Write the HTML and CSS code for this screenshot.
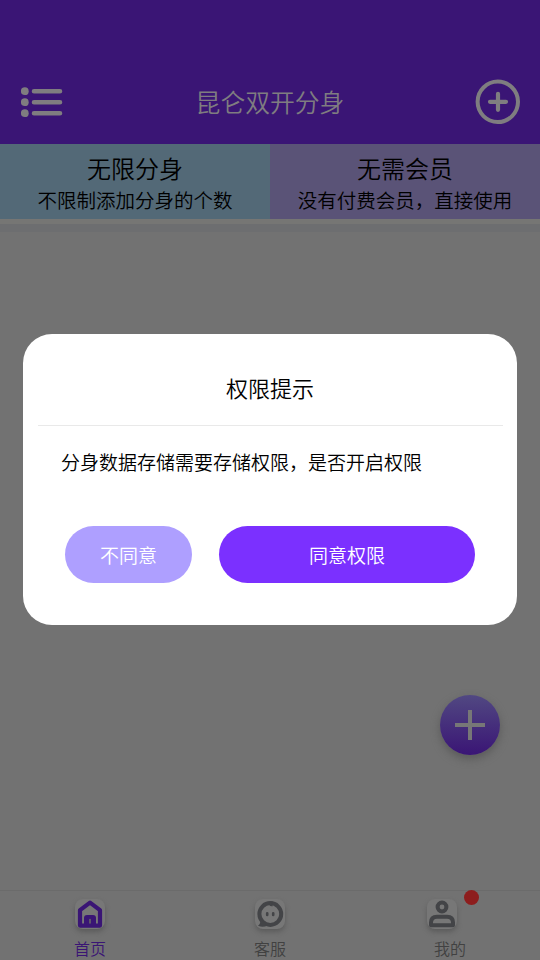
FILE: index.html
```html
<!DOCTYPE html>
<html lang="zh-CN">
<head>
<meta charset="utf-8">
<title>昆仑双开分身</title>
<link rel="stylesheet" href="styles.css">
</head>
<body>
<div class="app">
  <header class="header">
    <svg class="menu" width="42" height="32" viewBox="0 0 42 32">
      <g fill="currentColor"><circle cx="3.8" cy="5.2" r="3.9"/><circle cx="3.8" cy="16.2" r="3.9"/><circle cx="3.8" cy="27.2" r="3.9"/></g>
      <path d="M13 5.2H39M13 16.2H39M13 27.2H39" stroke="currentColor" stroke-width="4.6" stroke-linecap="round"/>
    </svg>
    <h1 class="title">昆仑双开分身</h1>
    <svg class="add" width="46" height="46" viewBox="0 0 46 46" fill="none" stroke="currentColor" stroke-linecap="round">
      <circle cx="22.8" cy="22.8" r="20.2" stroke-width="4"/>
      <path d="M15 22.8H31M23 14.8V30.8" stroke-width="4.2"/>
    </svg>
  </header>
  <section class="features">
    <div class="feature feature-blue"><strong>无限分身</strong><span>不限制添加分身的个数</span></div>
    <div class="feature feature-violet"><strong>无需会员</strong><span>没有付费会员，直接使用</span></div>
  </section>
  <div class="divider"></div>
  <main class="content"></main>
  <nav class="tabs">
    <a class="tab active">
      <span class="icon"><svg width="30" height="30" viewBox="0 0 30 30"><path d="M5 11.2 15 3.6 25 11.2V26.6H5Z" fill="none" stroke="currentColor" stroke-width="4.2" stroke-linejoin="round"/><path d="M9 26V19Q9 16 12 16H18Q21 16 21 19V26Z" fill="currentColor"/><path d="M15 20.5V24" stroke="#666" stroke-width="1.6" stroke-linecap="round"/></svg></span>
      <span>首页</span>
    </a>
    <a class="tab">
      <span class="icon"><svg width="30" height="30" viewBox="0 0 30 30"><circle cx="15.3" cy="15" r="10.9" fill="none" stroke="currentColor" stroke-width="4"/><path d="M5 20Q6.2 24.8 3 26.8Q8 29 12.5 26.5ZM13.5 4.5Q14.5 7.8 17.8 7.2Q16.2 5 17.5 2.3Z" fill="currentColor"/><path d="M12.2 14.3V16M18.2 14.3V16" fill="none" stroke="currentColor" stroke-width="2.6" stroke-linecap="round"/></svg></span>
      <span>客服</span>
    </a>
    <a class="tab">
      <span class="icon icon-user"><svg width="30" height="30" viewBox="0 0 30 30" fill="none" stroke="currentColor" stroke-width="4"><circle cx="15" cy="8" r="4.4"/><path d="M4 26.2V23.5Q4 17.7 10 17.7H20Q26 17.7 26 23.5V26.2Z" stroke-linejoin="round"/></svg><i class="badge"></i></span>
      <span>我的</span>
    </a>
  </nav>
  <button class="fab"><svg width="30" height="30" viewBox="0 0 30 30"><path d="M0 15H30M15 0V30" stroke="currentColor" stroke-width="4"/></svg></button>
  <div class="dialog">
    <h2 class="dialog-title">权限提示</h2>
    <p class="message">分身数据存储需要存储权限，是否开启权限</p>
    <div class="actions"><button class="btn decline">不同意</button><button class="btn accept">同意权限</button></div>
  </div>
</div>
</body>
</html>
```
FILE: styles.css
```css
* { box-sizing: border-box; }
body { margin: 0; font-family: "Noto Sans CJK SC", sans-serif; font-weight: 350; }
button { border: 0; padding: 0; font: inherit; }
svg { display: block; }
.app { position: relative; width: 540px; height: 960px; display: flex; flex-direction: column; background: #727272; overflow: hidden; }
.header { height: 144px; padding: 60px 19px 0 21px; display: flex; align-items: center; justify-content: space-between; background: #3a1575; color: #7f7d80; }
.title { margin: -2px -2px 0 0; font-size: 24.8px; font-weight: 350; line-height: 36px; }
.features { height: 75px; display: flex; }
.feature { flex: 1; display: flex; flex-direction: column; align-items: center; padding-top: 6px; color: #000; }
.feature strong { font-size: 24px; line-height: 36px; font-weight: 350; }
.feature span { font-size: 19.5px; line-height: 28px; }
.feature-blue { background: #536977; }
.feature-violet { background: #5a5377; }
.divider { height: 13px; border-top: 5px solid #767674; background: #6d6e70; }
.content { flex: 1; }
.tabs { height: 70px; border-top: 1px solid #6b6b6b; display: flex; background: #727272; color: #414141; font-size: 16px; }
.tab { flex: 1; display: flex; flex-direction: column; align-items: center; padding-top: 8px; line-height: 24px; gap: 7px; }
.active { color: #3a1575; }
.icon { position: relative; width: 30px; height: 30px; border-radius: 8px; background: #777; box-shadow: 0 3px 5px #5c5c5c; color: #434447; }
.active .icon { color: #3a1575; }
.icon-user { margin-right: 16px; }
.badge { position: absolute; left: 37px; top: -9px; width: 15px; height: 15px; border-radius: 50%; background: #8d1d1d; }
.fab { position: absolute; left: 440px; top: 695px; width: 60px; height: 60px; border-radius: 50%; display: grid; place-items: center; background: linear-gradient(#514882, #3a1575); color: #777; box-shadow: 0 4px 9px #5a5a5a; }
.dialog { position: absolute; left: 23px; top: 334px; width: 494px; height: 291px; border-radius: 29px; background: #fff; padding: 0 14px 0 15px; color: #000; }
.dialog-title { height: 92px; margin: 0; padding: 37px 1px 0 0; border-bottom: 1px solid #e9e9e9; text-align: center; font-size: 22px; line-height: 33px; font-weight: 350; }
.message { margin: 0; padding: 21px 0 0 23px; font-size: 19px; line-height: 29px; }
.actions { display: flex; gap: 27px; padding: 50px 0 0 27px; }
.btn { height: 57px; padding-bottom: 1px; border-radius: 29px; color: #fff; font-size: 19px; }
.decline { width: 127px; background: #ae9fff; }
.accept { width: 256px; background: #7b30ff; }
```
